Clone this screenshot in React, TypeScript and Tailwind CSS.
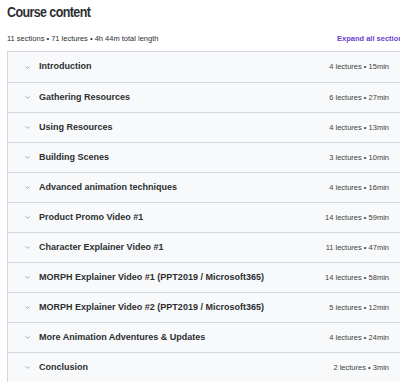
import { ChevronDown } from 'lucide-react';

const sections = [
  { title: 'Introduction', meta: '4 lectures • 15min' },
  { title: 'Gathering Resources', meta: '6 lectures • 27min' },
  { title: 'Using Resources', meta: '4 lectures • 13min' },
  { title: 'Building Scenes', meta: '3 lectures • 10min' },
  { title: 'Advanced animation techniques', meta: '4 lectures • 16min' },
  { title: 'Product Promo Video #1', meta: '14 lectures • 59min' },
  { title: 'Character Explainer Video #1', meta: '11 lectures • 47min' },
  { title: 'MORPH Explainer Video #1 (PPT2019 / Microsoft365)', meta: '14 lectures • 58min' },
  { title: 'MORPH Explainer Video #2 (PPT2019 / Microsoft365)', meta: '5 lectures • 12min' },
  { title: 'More Animation Adventures & Updates', meta: '4 lectures • 24min' },
  { title: 'Conclusion', meta: '2 lectures • 3min' },
];

export default function App() {
  return (
    <div className="w-[400px] h-[382px] overflow-hidden bg-white font-['Liberation_Sans',Arial,sans-serif] text-[#2d2f31]">
      <div className="w-[400px] ml-[7px]">
        <h2 className="text-[12.5px] leading-[22px] pt-[1px] font-bold tracking-[-0.6px] scale-y-[1.15] origin-left">Course content</h2>

        <div className="flex items-center justify-between h-[24px] mt-[4px]">
          <span className="text-[7.5px] text-[#2d2f31]">11 sections • 71 lectures • 4h 44m total length</span>
          <button className="text-[7.5px] font-bold text-[#6a3fd2]">Expand all sections</button>
        </div>

        <div className="border border-[#d1d7dc]">
          {sections.map((s, i) => (
            <div
              key={s.title}
              className={`flex items-center justify-between h-[30px] bg-[#f7f9fa] pl-[16px] pr-[17px] ${i > 0 ? 'border-t border-[#d1d7dc]' : ''}`}
            >
              <div className="flex items-center gap-[8px]">
                <ChevronDown className="w-[7px] h-[7px] text-[#6a6f73]" strokeWidth={2} />
                <span className="text-[9px] font-bold">{s.title}</span>
              </div>
              <span className="text-[7.5px] text-[#3e4143]">{s.meta}</span>
            </div>
          ))}
        </div>
      </div>
    </div>
  );
}
